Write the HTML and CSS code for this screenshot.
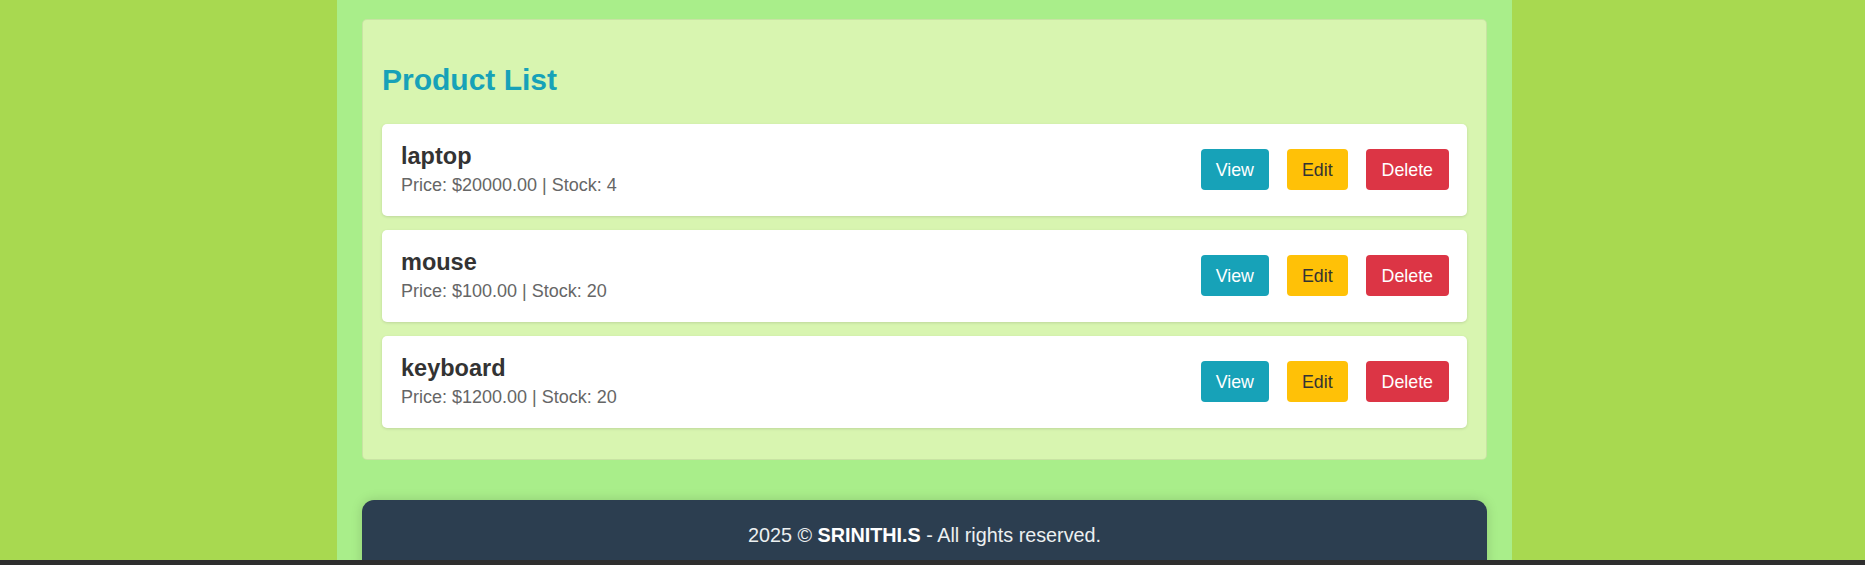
FILE: index.html
```html
<!DOCTYPE html>
<html lang="en">
<head>
<meta charset="utf-8">
<title>Product List</title>
<link rel="stylesheet" href="styles.css">
</head>
<body>
<div class="viewport">
  <div class="container">
    <section class="panel">
      <h2 class="title">Product List</h2>
      <div class="list">
        <div class="card">
          <div class="info">
            <h3 class="name">laptop</h3>
            <p class="meta">Price: $20000.00 | Stock: 4</p>
          </div>
          <div class="actions">
            <button class="btn btn-view">View</button>
            <button class="btn btn-edit">Edit</button>
            <button class="btn btn-delete">Delete</button>
          </div>
        </div>
        <div class="card">
          <div class="info">
            <h3 class="name">mouse</h3>
            <p class="meta">Price: $100.00 | Stock: 20</p>
          </div>
          <div class="actions">
            <button class="btn btn-view">View</button>
            <button class="btn btn-edit">Edit</button>
            <button class="btn btn-delete">Delete</button>
          </div>
        </div>
        <div class="card">
          <div class="info">
            <h3 class="name">keyboard</h3>
            <p class="meta">Price: $1200.00 | Stock: 20</p>
          </div>
          <div class="actions">
            <button class="btn btn-view">View</button>
            <button class="btn btn-edit">Edit</button>
            <button class="btn btn-delete">Delete</button>
          </div>
        </div>
      </div>
    </section>
    <footer class="footer">2025 &copy; <strong>SRINITHI.S</strong> - All rights reserved.</footer>
  </div>
</div>
<div class="bottom-bar"></div>
</body>
</html>
```
FILE: styles.css
```css
* { box-sizing: border-box; }

html, body {
  margin: 0;
  padding: 0;
}

body {
  background: #a8d950;
  font-family: "Liberation Sans", Arial, sans-serif;
  padding-right: 16px;
  overflow: hidden;
  height: 565px;
}

.viewport {
  height: 560px;
  overflow: hidden;
}

.container {
  width: 1175px;
  margin: 0 auto;
  height: 560px;
  background: #a9ee8a;
  padding: 19px 25px 0;
}

.panel {
  background: #d8f5b0;
  border: 1px solid rgba(0, 0, 0, 0.07);
  border-radius: 5px;
  padding: 19px 19px 31px;
}

.title {
  margin: 24px 0 26px;
  font-size: 30px;
  font-weight: 700;
  color: #17a2b8;
  line-height: 34.5px;
}

.list {
  display: flex;
  flex-direction: column;
  gap: 14px;
}

.card {
  background: #ffffff;
  border-radius: 5px;
  box-shadow: 0 1px 3px rgba(0, 0, 0, 0.12);
  display: flex;
  align-items: center;
  justify-content: space-between;
  padding: 19px 18px 19px 19px;
  min-height: 92px;
}

.name {
  margin: 0 0 6px;
  font-size: 23.5px;
  font-weight: 700;
  color: #333333;
  line-height: 26.5px;
}

.meta {
  margin: 0;
  font-size: 18px;
  color: #666666;
  line-height: 20.7px;
}

.actions {
  display: flex;
  gap: 18px;
}

.btn {
  font-family: "Liberation Sans", Arial, sans-serif;
  font-size: 17.8px;
  line-height: 20px;
  border: none;
  border-radius: 4px;
  padding: 10.5px 15px;
  cursor: pointer;
}

.btn-view {
  background: #17a2b8;
  color: #ffffff;
}

.btn-edit {
  background: #ffc107;
  color: #333333;
}

.btn-delete {
  background: #dc3545;
  color: #ffffff;
  padding-left: 16px;
  padding-right: 16px;
}

.footer {
  margin-top: 40px;
  background: #2c3e50;
  color: #ecf0f1;
  border-radius: 12px;
  box-shadow: 0 0 12px rgba(0, 0, 0, 0.15);
  text-align: center;
  font-size: 19.8px;
  line-height: 22.8px;
  padding: 24px 20px 40px;
}

.footer strong {
  font-weight: 700;
  color: #ffffff;
}

.bottom-bar {
  height: 5px;
  margin-right: -16px;
  background: #2e2e2e;
}
```
